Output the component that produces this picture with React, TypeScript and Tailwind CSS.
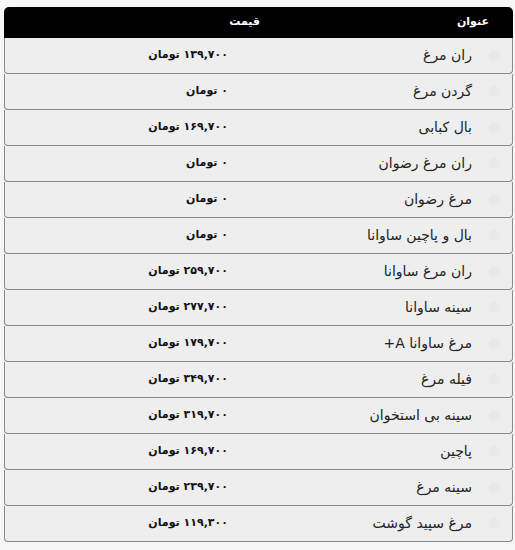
const items: { name: string; price: string }[] = [
  { name: "ران مرغ", price: "۱۳۹,۷۰۰" },
  { name: "گردن مرغ", price: "۰" },
  { name: "بال کبابی", price: "۱۶۹,۷۰۰" },
  { name: "ران مرغ رضوان", price: "۰" },
  { name: "مرغ رضوان", price: "۰" },
  { name: "بال و پاچین ساوانا", price: "۰" },
  { name: "ران مرغ ساوانا", price: "۲۵۹,۷۰۰" },
  { name: "سینه ساوانا", price: "۲۷۷,۷۰۰" },
  { name: "مرغ ساوانا A+", price: "۱۷۹,۷۰۰" },
  { name: "فیله مرغ", price: "۳۴۹,۷۰۰" },
  { name: "سینه بی استخوان", price: "۳۱۹,۷۰۰" },
  { name: "پاچین", price: "۱۶۹,۷۰۰" },
  { name: "سینه مرغ", price: "۲۳۹,۷۰۰" },
  { name: "مرغ سپید گوشت", price: "۱۱۹,۳۰۰" },
];

export default function App() {
  return (
    <div
      dir="rtl"
      className="min-h-[550px] bg-[#f6f6f6] pt-[7px] pr-[2px] pl-[4px]"
      style={{ fontFamily: '"DejaVu Sans", "Noto Sans", sans-serif' }}
    >
      <div className="w-[509px]">
        <div className="flex h-[31px] items-center rounded-t-[5px] bg-black text-[11px] font-bold text-white">
          <div className="w-[253px] pr-[24px]">عنوان</div>
          <div>قیمت</div>
        </div>
        {items.map((item, i) => (
          <div
            key={i}
            className="flex h-[36px] items-center rounded-b-[4px] border-x border-b border-[#8a8a8a] bg-[#eeeeee]"
          >
            <div className="flex w-[284px] items-center gap-[17px] pr-[12px]">
              <span className="h-[11px] w-[11px] shrink-0 rounded-full bg-[#e6ebe6]" />
              <span className="text-[14px] text-[#222]">{item.name}</span>
            </div>
            <div className="text-[11px] font-bold text-[#111]">
              {item.price} تومان
            </div>
          </div>
        ))}
      </div>
    </div>
  );
}
